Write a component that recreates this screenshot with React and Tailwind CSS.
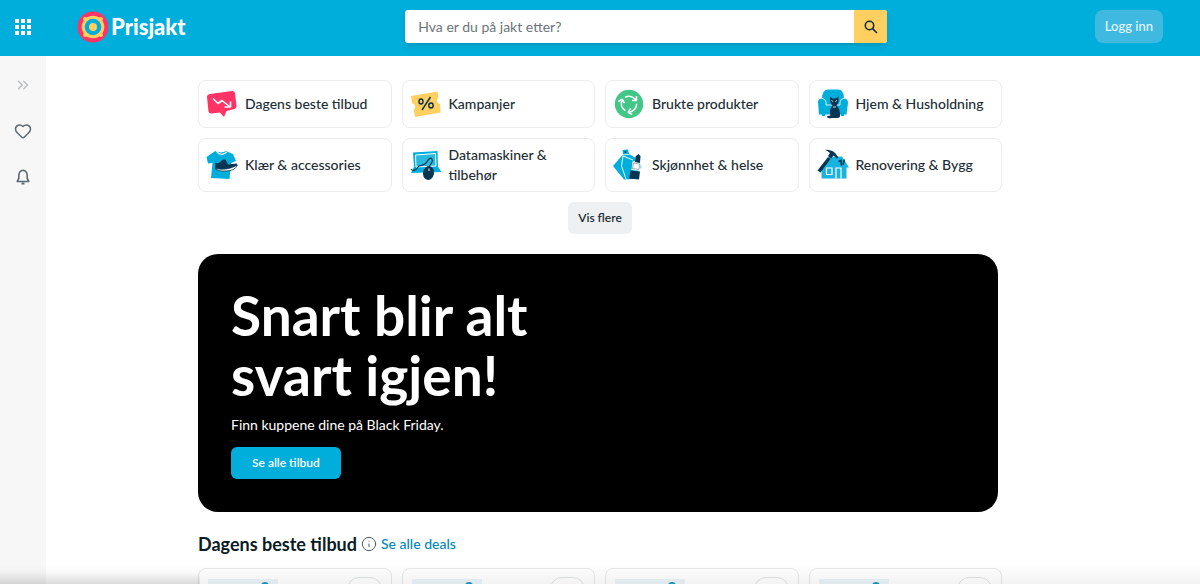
import { useState } from "react";
import { ChevronsRight, Heart, Info } from "lucide-react";

const DealIcon = () => (
  <svg viewBox="0 0 32 32" className="size-8 shrink-0" aria-hidden="true">
    <path d="M4 6 26 3Q28.500 3 29 5L30.500 18Q30.500 20.500 28.500 21L20.500 23 18 29 14 24.500 5 25.500Q3 25.500 2.500 23.500L1 9Q1 6.500 4 6Z" fill="#ff3366" />
    <path d="M7 10.500 12 15.500 16 12.500 23.500 18.500M18.500 19 24.500 19 24.500 13.500" fill="none" stroke="#fff" strokeWidth="1.600" strokeLinejoin="round" />
  </svg>
);

const CampaignIcon = () => (
  <svg viewBox="0 0 32 32" className="size-8 shrink-0" aria-hidden="true">
    <path d="M1 8 27.500 3.500 28.500 10Q26 11.500 27 13.500 28 15.500 30 16L30.500 24.500 5 29 3.500 21.500Q6 20 5 17.500 4 15.500 2 15Z" fill="#ffcf60" />
    <g fill="none" stroke="#0d2f49" strokeWidth="1.400">
      <ellipse cx="11" cy="13.500" rx="2" ry="2.500" />
      <ellipse cx="21" cy="17.500" rx="2.200" ry="2.500" />
      <path d="M20.500 9 12 22" />
    </g>
  </svg>
);

const RecycleIcon = () => (
  <svg viewBox="0 0 32 32" className="size-8 shrink-0" aria-hidden="true">
    <circle cx="16" cy="16" r="14.200" fill="#43c788" />
    <g fill="none" stroke="#fff" strokeWidth="1.500" strokeLinejoin="round">
      <g id="arrow">
        <path d="M12 9.500A8 8 0 0 1 22.500 11.500M23.500 8V12.500H19" />
      </g>
      <use href="#arrow" transform="rotate(120 16 16)" />
      <use href="#arrow" transform="rotate(240 16 16)" />
    </g>
  </svg>
);

const HomeIcon = () => (
  <svg viewBox="0 0 32 32" className="size-8 shrink-0" aria-hidden="true">
    <path d="M5 11Q5 1.500 11 1.500H21Q27 1.500 27 11L24 18H8Z" fill="#00aedb" />
    <path d="M1 14Q1 10.500 5 10.500 9 10.500 9 17H23Q23 10.500 27 10.500 31 10.500 31 15L29.500 26.500H27V28H24V26.500H8V28H5V26.500H2Z" fill="#00aedb" />
    <path d="M9 17V14Q8.500 10.500 4.500 10.200M23 17V14Q23.500 10.500 27.500 10.200M9 17H23" fill="none" stroke="#fff" strokeWidth=".8" />
    <path d="M13 8.500 15.500 10.500H18.500L21.500 8.500V14Q20.500 16.500 19.500 17.500 23.500 21 23 28.500 22.500 30 18 30H15Q11 31 10 29 10 27.500 13.500 27.500 11.500 22 15.500 17.500 12.500 15.500 13 8.500Z" fill="#063653" />
    <path d="M14.500 12.500 16.200 13.500M20 12.500 18.300 13.500M16 19H19" stroke="#fff" strokeWidth=".8" />
  </svg>
);

const ClothesIcon = () => (
  <svg viewBox="0 0 32 32" className="size-8 shrink-0" aria-hidden="true">
    <path d="M10 1.500Q15 5 20 2L27 5 30 12 25 14 23.500 30 5 29 6.500 14 2 14.500 .5 8Z" fill="#00aedb" />
    <path d="M10 2Q15 8 21 3" fill="none" stroke="#fff" strokeWidth="1.200" />
    <path d="M9.500 13.500 12 14.500 17 10.500 19.500 10.500 22 15.500 31 14.500Q31 18 27 19.500 22 21 9 19.500Z" fill="#063653" />
    <path d="M9 19.500Q21 22 31.500 16 29 22 20 22 12 22.500 9 19.500Z" fill="#fff" stroke="#063653" strokeWidth=".8" />
  </svg>
);

const ComputerIcon = () => (
  <svg viewBox="0 0 32 32" className="size-8 shrink-0" aria-hidden="true">
    <path d="M3 3.500 27.500 2 28 18 31.500 23 1 24 4 18Z" fill="#00aedb" />
    <path d="M5.500 6 25.500 4.500 26 17 6 18Z" fill="#28b9df" stroke="#fff" strokeWidth="1" />
    <path d="M1 20Q4 24 9 17 16 16 18 11 22 7 22.500 12 21 15 19 18" fill="none" stroke="#063653" strokeWidth="1.200" />
    <ellipse cx="18.500" cy="24" rx="5.500" ry="7" transform="rotate(12 18.500 24)" fill="#063653" />
    <path d="M19 19.500V22" stroke="#fff" strokeWidth="1" />
  </svg>
);

const BeautyIcon = () => (
  <svg viewBox="0 0 32 32" className="size-8 shrink-0" aria-hidden="true">
    <path d="M9.500 1 15 .5 16 5 10 5.500Z" fill="#00aedb" />
    <path d="M9 6.500 17 5.500 26 11 28.500 18 21 30 11 30.500 0 17Z" fill="#00aedb" />
    <path d="M10 7 8.500 17 13 30M10 7 20 11" fill="none" stroke="#fff" strokeWidth=".9" />
    <circle cx="12.500" cy="3" r="1" fill="#063653" />
    <path d="M19.500 12.500 22 12V7L26 4.500 28 6.500 27.500 22 18.500 21Z" fill="#fff" />
    <path d="M22.500 7.500 25.500 5 27.500 7 27 14 22 13Z" fill="#063653" />
    <path d="M20.500 14 26.500 15 26 20.500 19.500 19.500Z" fill="#fff" stroke="#063653" strokeWidth=".4" />
    <path d="M17.500 21.500 27 22.500 26 30.500 16 29.500Z" fill="#063653" />
  </svg>
);

const RenovationIcon = () => (
  <svg viewBox="0 0 32 32" className="size-8 shrink-0" aria-hidden="true">
    <path d="M12 8 25 7.500 32 18.500H29.500V29.500H4.500V20H2Z" fill="#18b3df" />
    <path d="M9.500 19H15V25.500H9.500ZM19 29.500V19H24V29.500" fill="none" stroke="#fff" strokeWidth="1.200" />
    <path d="M.5 21.500 11 8 13.500 10 3.500 23.500Z" fill="#063653" />
    <path d="M8 .8Q15 .5 18.500 4.500L21.500 8.500 20 9.500 16.500 6.500 14 9.500 11 7 13 4Q11 2 8 .8Z" fill="#063653" />
    <path d="M21.500 12.500 24 11.500 24.500 16.500M26 15.500 27.500 10.500" fill="none" stroke="#063653" strokeWidth="1.600" />
  </svg>
);

const BellIcon = () => (
  <svg viewBox="0 0 18 18" className="size-[18px]" fill="none" stroke="currentColor" strokeWidth="1.600" strokeLinejoin="round" aria-hidden="true">
    <path d="M9 2.200Q5 2.500 4.800 7.500V10.500L3.200 13.500H14.800L13.200 10.500V7.500Q13 2.500 9 2.200Z" />
    <path d="M7.500 15.500H10.500" strokeWidth="2" />
  </svg>
);

const categories = [
  { name: "Dagens beste tilbud", icon: DealIcon },
  { name: "Kampanjer", icon: CampaignIcon },
  { name: "Brukte produkter", icon: RecycleIcon },
  { name: "Hjem & Husholdning", icon: HomeIcon },
  { name: "Klær & accessories", icon: ClothesIcon },
  { name: "Datamaskiner & tilbehør", icon: ComputerIcon },
  { name: "Skjønnhet & helse", icon: BeautyIcon },
  { name: "Renovering & Bygg", icon: RenovationIcon },
];

const Logo = () => (
  <a href="#" className="flex items-center gap-[2px] text-white">
    <svg viewBox="0 0 32 32" className="size-8" aria-hidden="true">
      <circle cx="16" cy="16" r="15.500" fill="#ff3366" />
      <circle cx="16" cy="16" r="11.300" fill="#ffcf60" />
      <g fill="#ffcf60">
        <circle cx="8" cy="8" r="2" />
        <circle cx="24" cy="8" r="2" />
        <circle cx="8" cy="24" r="2" />
        <circle cx="24" cy="24" r="2" />
      </g>
      <circle cx="16" cy="16" r="8.300" fill="#00aedb" />
      <circle cx="16" cy="16" r="4" fill="#ffcf60" />
    </svg>
    <span className="text-[22px] leading-8 font-black">Prisjakt</span>
  </a>
);

const Header = () => {
  const [query, setQuery] = useState("");

  return (
    <header className="flex h-14 items-center bg-[#00aedb] pr-[37px] pb-[3px] pl-[15px]">
      <button type="button" aria-label="Meny" className="mr-[46px]">
        <svg viewBox="0 0 16 16" className="size-4" fill="#fff" aria-hidden="true">
          {[0, 6, 12].map((y) => [0, 6, 12].map((x) => <rect key={`${x}-${y}`} x={x} y={y} width="4" height="4" />))}
        </svg>
      </button>
      <Logo />
      <div className="flex flex-1 justify-center pl-3">
        <form onSubmit={(e) => e.preventDefault()} className="flex h-[33px] w-full max-w-[482px] overflow-hidden rounded-[3px] bg-white shadow-md">
          <input
            type="search"
            aria-label="Søk"
            placeholder="Hva er du på jakt etter?"
            value={query}
            onChange={(e) => setQuery(e.target.value)}
            className="min-w-0 flex-1 px-[13px] text-[14px] outline-none placeholder:text-[#6c7478]"
          />
          <button type="submit" aria-label="Søk" className="flex w-[33px] items-center justify-center bg-[#ffcf60]">
            <svg viewBox="0 0 14 14" className="size-[14px]" fill="none" stroke="#142d3a" strokeWidth="1.600" aria-hidden="true">
              <circle cx="5.500" cy="5.500" r="4.200" />
              <path d="M8.600 8.600 13 13" />
            </svg>
          </button>
        </form>
      </div>
      <button type="button" className="h-[33px] rounded-lg bg-[#40b9e0] px-[10px] text-[13px] font-medium text-[#e4f6fc]">
        Logg inn
      </button>
    </header>
  );
};

const Sidebar = () => (
  <aside className="flex w-[46px] shrink-0 flex-col items-center gap-7 bg-[#f7f7f7] pt-5">
    <button type="button" aria-label="Utvid" className="text-[#b9bec1]">
      <ChevronsRight className="size-[18px]" strokeWidth={2} />
    </button>
    <button type="button" aria-label="Favoritter" className="text-[#5d6b72]">
      <Heart className="size-[18px]" strokeWidth={2} />
    </button>
    <button type="button" aria-label="Varsler" className="text-[#5d6b72]">
      <BellIcon />
    </button>
  </aside>
);

const Hero = () => (
  <section className="mt-5 mr-1 flex flex-col items-start rounded-[20px] bg-black px-[33px] pt-[31px] pb-[33px] text-white">
    <h1 className="text-[55px] leading-[60px] font-bold">
      Snart blir alt
      <br />
      svart igjen!
    </h1>
    <p className="mt-[10px] text-[14px] leading-5">Finn kuppene dine på Black Friday.</p>
    <button type="button" className="mt-3 h-8 rounded-md bg-[#00aedb] px-[21px] text-[12px] font-semibold">
      Se alle tilbud
    </button>
  </section>
);

const Deals = () => (
  <section className="mt-5">
    <div className="flex items-center gap-1">
      <h2 className="text-[18px] leading-6 font-bold text-[#0b1b23]">Dagens beste tilbud</h2>
      <Info className="size-4 text-[#4c585e]" strokeWidth={1.5} />
      <a href="#" className="text-[14px] leading-6 font-medium text-[#0088b6]">
        Se alle deals
      </a>
    </div>
    <div className="mt-3 grid grid-cols-4 gap-[10px]">
      {[1, 2, 3, 4].map((n) => (
        <article key={n} className="flex h-60 items-start justify-between rounded-lg border border-[#e5e7e8] px-[9px] pt-2">
          <div className="mt-[2px] flex h-5 w-[70px] justify-end bg-[#eaf4f8] px-[9px] pt-[3px]">
            <span className="size-2 rounded-full bg-[#2096ba]" />
          </div>
          <span className="h-8 w-[35px] rounded-xl border border-[#dfe2e3]" />
        </article>
      ))}
    </div>
  </section>
);

export default function App() {
  return (
    <div className="relative h-screen overflow-hidden bg-white font-['Lato',sans-serif] text-[#1c2d36]">
      <Header />
      <div className="flex">
        <Sidebar />
        <main className="min-w-0 flex-1 pt-6 pr-[46px]">
          <div className="mx-auto max-w-[804px]">
            <nav className="grid grid-cols-4 gap-[10px]">
              {categories.map(({ name, icon: Icon }) => (
                <a key={name} href="#" className="flex min-h-12 items-center gap-[7px] rounded-lg border border-[#ebeced] px-[7px] py-[6px] text-[14px] leading-5 font-medium">
                  <Icon />
                  <span>{name}</span>
                </a>
              ))}
            </nav>
            <div className="mt-[10px] flex justify-center">
              <button type="button" className="h-8 rounded-md bg-[#eff0f1] px-[10px] text-[12px] font-semibold">
                Vis flere
              </button>
            </div>
            <Hero />
            <Deals />
          </div>
        </main>
      </div>
      <div className="pointer-events-none absolute inset-x-0 bottom-0 h-5 bg-linear-to-b from-transparent to-black/5" />
      <div className="pointer-events-none absolute bottom-0 left-0 h-3 w-[200px] bg-linear-to-b from-transparent to-black/10" />
    </div>
  );
}
